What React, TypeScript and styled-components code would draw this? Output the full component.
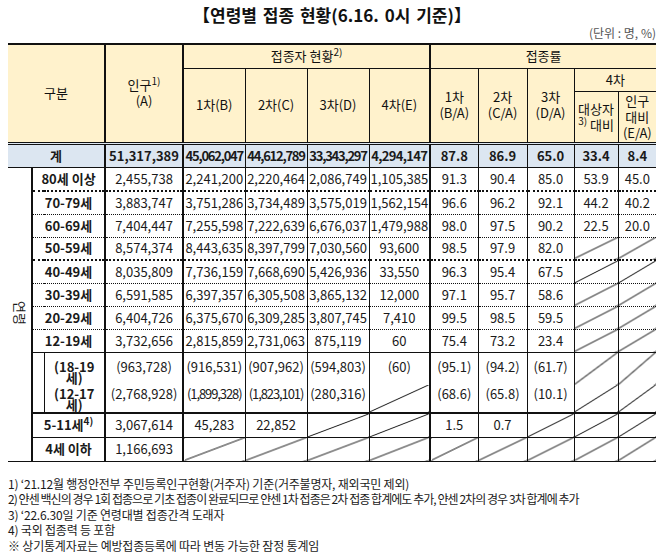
import React from 'react';
import styled, { createGlobalStyle, css } from 'styled-components';

const THIN = '1px solid #111';
const BOLD = '2px solid #111';
const DOT = '1px dotted #111';
const DOT_BOLD = '2px dotted #111';
const DOUBLE = '3px double #111';

// vertical rule on the left of each column; the last one closes the table
const RULES = ['none', BOLD, THIN, BOLD, BOLD, THIN, THIN, THIN, BOLD, THIN, THIN, THIN, THIN, 'none'];
const WIDTHS = [24, 12, 61, 78, 62, 62, 62, 61, 48, 49, 47, 44, 38];

const edges = (col: number, span = 1) => ({ $l: RULES[col], $r: RULES[col + span] });

const GlobalStyle = createGlobalStyle`
  html, body {
    margin: 0;
    padding: 0;
    background: #fff;
  }
  body {
    font-family: 'Noto Sans CJK KR', 'Noto Sans', sans-serif;
    color: #111;
  }
`;

const Page = styled.div`
  width: 662px;
  height: 558px;
  box-sizing: border-box;
  padding: 0 6px 0 8px;
  overflow: hidden;
`;

const Title = styled.h1`
  margin: 0;
  padding-top: 3px;
  font-size: 17px;
  line-height: 24px;
  font-weight: 700;
  text-align: center;
  word-spacing: 2px;
  color: #111;
`;

const Unit = styled.div`
  font-size: 12px;
  line-height: 12px;
  text-align: right;
  color: #555;
`;

const Table = styled.table`
  border-collapse: collapse;
  table-layout: fixed;
  width: 648px;
  margin-top: 4px;
  border-top: ${BOLD};
`;

const Col = styled.col<{ $w: number }>`
  width: ${p => p.$w}px;
`;

interface CellProps {
  $l: string;
  $r: string;
  $b?: string;
  $h?: number;
  $bold?: boolean;
  $squeeze?: number;
  $diag?: boolean;
  $total?: boolean;
  $top?: number;
}

const cellBase = css<CellProps>`
  box-sizing: border-box;
  height: ${p => (p.$h ? `${p.$h}px` : 'auto')};
  padding: ${p => p.$top ?? 0}px 1px 0;
  border-left: ${p => p.$l};
  border-right: ${p => p.$r};
  border-top: none;
  border-bottom: ${p => p.$b ?? 'none'};
  text-align: center;
  vertical-align: ${p => (p.$top !== undefined ? 'top' : 'middle')};
  font-size: 13px;
  font-weight: ${p => (p.$bold ? 700 : 400)};
  letter-spacing: ${p => (p.$squeeze ? `-${p.$squeeze}px` : '0')};
  white-space: nowrap;
  color: #1a1a1a;
`;

const Th = styled.th<CellProps>`
  ${cellBase}
  background: #fff2cc;
  line-height: 16px;
  color: #111;
`;

const Td = styled.td<CellProps>`
  ${cellBase}
  line-height: 16px;
  background: ${p =>
    p.$diag
      ? 'linear-gradient(to bottom right, transparent calc(50% - 0.9px), #111 50%, transparent calc(50% + 0.9px))'
      : p.$total
      ? '#dce6f1'
      : 'transparent'};
`;

const GroupLabel = styled(Td)`
  line-height: 11px;
  font-weight: 700;
`;

const Vertical = styled.span`
  display: inline-block;
  writing-mode: vertical-rl;
  text-orientation: sideways;
  font-size: 13px;
  line-height: 14px;
`;

const Sup = styled.sup`
  font-size: 10px;
  line-height: 0;
  vertical-align: baseline;
  position: relative;
  top: -5px;
`;

const Notes = styled.div`
  margin-top: 14px;
  font-size: 12px;
  line-height: 15.5px;
  color: #1a1a1a;
`;

const Note = styled.div<{ $squeeze?: boolean }>`
  white-space: nowrap;
  letter-spacing: ${p => (p.$squeeze ? '-0.95px' : '-0.2px')};
`;

type Value = string | null;

interface AgeRowData {
  label: React.ReactNode;
  values: Value[];
  bottom: string;
  h?: number;
}

const ageRows: AgeRowData[] = [
  { label: '80세 이상', values: ['2,455,738', '2,241,200', '2,220,464', '2,086,749', '1,105,385', '91.3', '90.4', '85.0', '53.9', '45.0'], bottom: DOT_BOLD, h: 24 },
  { label: '70-79세', values: ['3,883,747', '3,751,286', '3,734,489', '3,575,019', '1,562,154', '96.6', '96.2', '92.1', '44.2', '40.2'], bottom: DOT },
  { label: '60-69세', values: ['7,404,447', '7,255,598', '7,222,639', '6,676,037', '1,479,988', '98.0', '97.5', '90.2', '22.5', '20.0'], bottom: DOT },
  { label: '50-59세', values: ['8,574,374', '8,443,635', '8,397,799', '7,030,560', '93,600', '98.5', '97.9', '82.0', null, null], bottom: DOT_BOLD },
  { label: '40-49세', values: ['8,035,809', '7,736,159', '7,668,690', '5,426,936', '33,550', '96.3', '95.4', '67.5', null, null], bottom: DOT },
  { label: '30-39세', values: ['6,591,585', '6,397,357', '6,305,508', '3,865,132', '12,000', '97.1', '95.7', '58.6', null, null], bottom: DOT },
  { label: '20-29세', values: ['6,404,726', '6,375,670', '6,309,285', '3,807,745', '7,410', '99.5', '98.5', '59.5', null, null], bottom: DOT },
  { label: '12-19세', values: ['3,732,656', '2,815,859', '2,731,063', '875,119', '60', '75.4', '73.2', '23.4', null, null], bottom: THIN },
];

interface SubRowData {
  label: React.ReactNode;
  values: Value[];
  squeeze: Record<number, number>;
  h: number;
  pad: number;
  labelPad: number;
  bottom: string;
}

const subRows: SubRowData[] = [
  {
    label: <>(18-19<br />세)</>,
    values: ['(963,728)', '(916,531)', '(907,962)', '(594,803)', '(60)', '(95.1)', '(94.2)', '(61.7)', null, null],
    squeeze: {},
    h: 33,
    pad: 6,
    labelPad: 8,
    bottom: 'none',
  },
  {
    label: <>(12-17<br />세)</>,
    values: ['(2,768,928)', '(1,899,328)', '(1,823,101)', '(280,316)', null, '(68.6)', '(65.8)', '(10.1)', null, null],
    squeeze: { 1: 1.1, 2: 1.1 },
    h: 28,
    pad: 1,
    labelPad: 3,
    bottom: BOLD,
  },
];

const tailRows: AgeRowData[] = [
  { label: <>5-11세<Sup>4)</Sup></>, values: ['3,067,614', '45,283', '22,852', null, null, '1.5', '0.7', null, null, null], bottom: THIN, h: 24 },
  { label: '4세 이하', values: ['1,166,693', null, null, null, null, null, null, null, null, null], bottom: THIN, h: 24 },
];

const totals = ['51,317,389', '45,062,047', '44,612,789', '33,343,297', '4,294,147', '87.8', '86.9', '65.0', '33.4', '8.4'];

const ValueCells: React.FC<{
  values: Value[];
  bottom: string;
  squeeze?: Record<number, number>;
  bold?: boolean;
  total?: boolean;
  pad?: number;
}> = ({ values, bottom, squeeze = {}, bold, total, pad }) => (
  <>
    {values.map((v, i) => (
      <Td
        key={i}
        {...edges(3 + i)}
        $b={bottom}
        $diag={v === null}
        $squeeze={squeeze[i]}
        $bold={bold}
        $total={total}
        $top={v === null ? undefined : pad}
      >
        {v}
      </Td>
    ))}
  </>
);

const App: React.FC = () => {
  return (
    <Page>
      <GlobalStyle />
      <Title>【연령별 접종 현황(6.16. 0시 기준)】</Title>
      <Unit>(단위 : 명, %)</Unit>

      <Table>
        <colgroup>
          {WIDTHS.map((w, i) => (
            <Col key={i} $w={w} />
          ))}
        </colgroup>
        <thead>
          <tr>
            <Th {...edges(0, 3)} colSpan={3} rowSpan={3} $b={DOUBLE}>
              구분
            </Th>
            <Th {...edges(3)} rowSpan={3} $b={DOUBLE}>
              인구<Sup>1)</Sup>
              <br />
              (A)
            </Th>
            <Th {...edges(4, 4)} colSpan={4} $b={THIN} $h={24}>
              접종자 현황<Sup>2)</Sup>
            </Th>
            <Th {...edges(8, 5)} colSpan={5} $b={THIN} $h={24}>
              접종률
            </Th>
          </tr>
          <tr>
            {['1차(B)', '2차(C)', '3차(D)', '4차(E)'].map((t, i) => (
              <Th key={t} {...edges(4 + i)} rowSpan={2} $b={DOUBLE}>
                {t}
              </Th>
            ))}
            {[['1차', '(B/A)'], ['2차', '(C/A)'], ['3차', '(D/A)']].map(([a, b], i) => (
              <Th key={b} {...edges(8 + i)} rowSpan={2} $b={DOUBLE}>
                {a}
                <br />
                {b}
              </Th>
            ))}
            <Th {...edges(11, 2)} colSpan={2} $b={THIN} $h={23}>
              4차
            </Th>
          </tr>
          <tr>
            <Th {...edges(11)} $b={DOUBLE} $h={52}>
              대상자
              <br />
              <Sup>3)</Sup> 대비
            </Th>
            <Th {...edges(12)} $b={DOUBLE} $h={52}>
              인구
              <br />
              대비
              <br />
              (E/A)
            </Th>
          </tr>
        </thead>
        <tbody>
          <tr>
            <Td {...edges(0, 3)} colSpan={3} $b={THIN} $h={24} $bold $total>
              계
            </Td>
            <ValueCells values={totals} bottom={THIN} squeeze={{ 1: 1.25, 2: 1.25, 3: 1.25, 4: 0.7 }} bold total />
          </tr>

          {ageRows.map((row, idx) => (
            <tr key={idx}>
              {idx === 0 && (
                <Td {...edges(0)} rowSpan={12} $b={THIN}>
                  <Vertical>연령</Vertical>
                </Td>
              )}
              <Td {...edges(1, 2)} colSpan={2} $b={row.bottom} $h={row.h ?? 23} $bold>
                {row.label}
              </Td>
              <ValueCells values={row.values} bottom={row.bottom} />
            </tr>
          ))}

          {subRows.map((row, idx) => (
            <tr key={`sub-${idx}`}>
              {idx === 0 && <Td {...edges(1)} rowSpan={2} $b={BOLD} />}
              <GroupLabel {...edges(2)} $b={row.bottom} $h={row.h} $top={row.labelPad}>
                {row.label}
              </GroupLabel>
              <ValueCells values={row.values} bottom={row.bottom} squeeze={row.squeeze} pad={row.pad} />
            </tr>
          ))}

          {tailRows.map((row, idx) => (
            <tr key={`tail-${idx}`}>
              <Td {...edges(1, 2)} colSpan={2} $b={row.bottom} $h={row.h} $bold>
                {row.label}
              </Td>
              <ValueCells values={row.values} bottom={row.bottom} />
            </tr>
          ))}
        </tbody>
      </Table>

      <Notes>
        <Note>1) ‘21.12월 행정안전부 주민등록인구현황(거주자) 기준(거주불명자, 재외국민 제외)</Note>
        <Note $squeeze>
          2) 얀센 백신의 경우 1회 접종으로 기초 접종이 완료되므로 얀센 1차 접종은 2차 접종 합계에도 추가, 얀센 2차의 경우 3차 합계에 추가
        </Note>
        <Note>3) ‘22.6.30일 기준 연령대별 접종간격 도래자</Note>
        <Note>4) 국외 접종력 등 포함</Note>
        <Note>※ 상기통계자료는 예방접종등록에 따라 변동 가능한 잠정 통계임</Note>
      </Notes>
    </Page>
  );
};

export default App;
